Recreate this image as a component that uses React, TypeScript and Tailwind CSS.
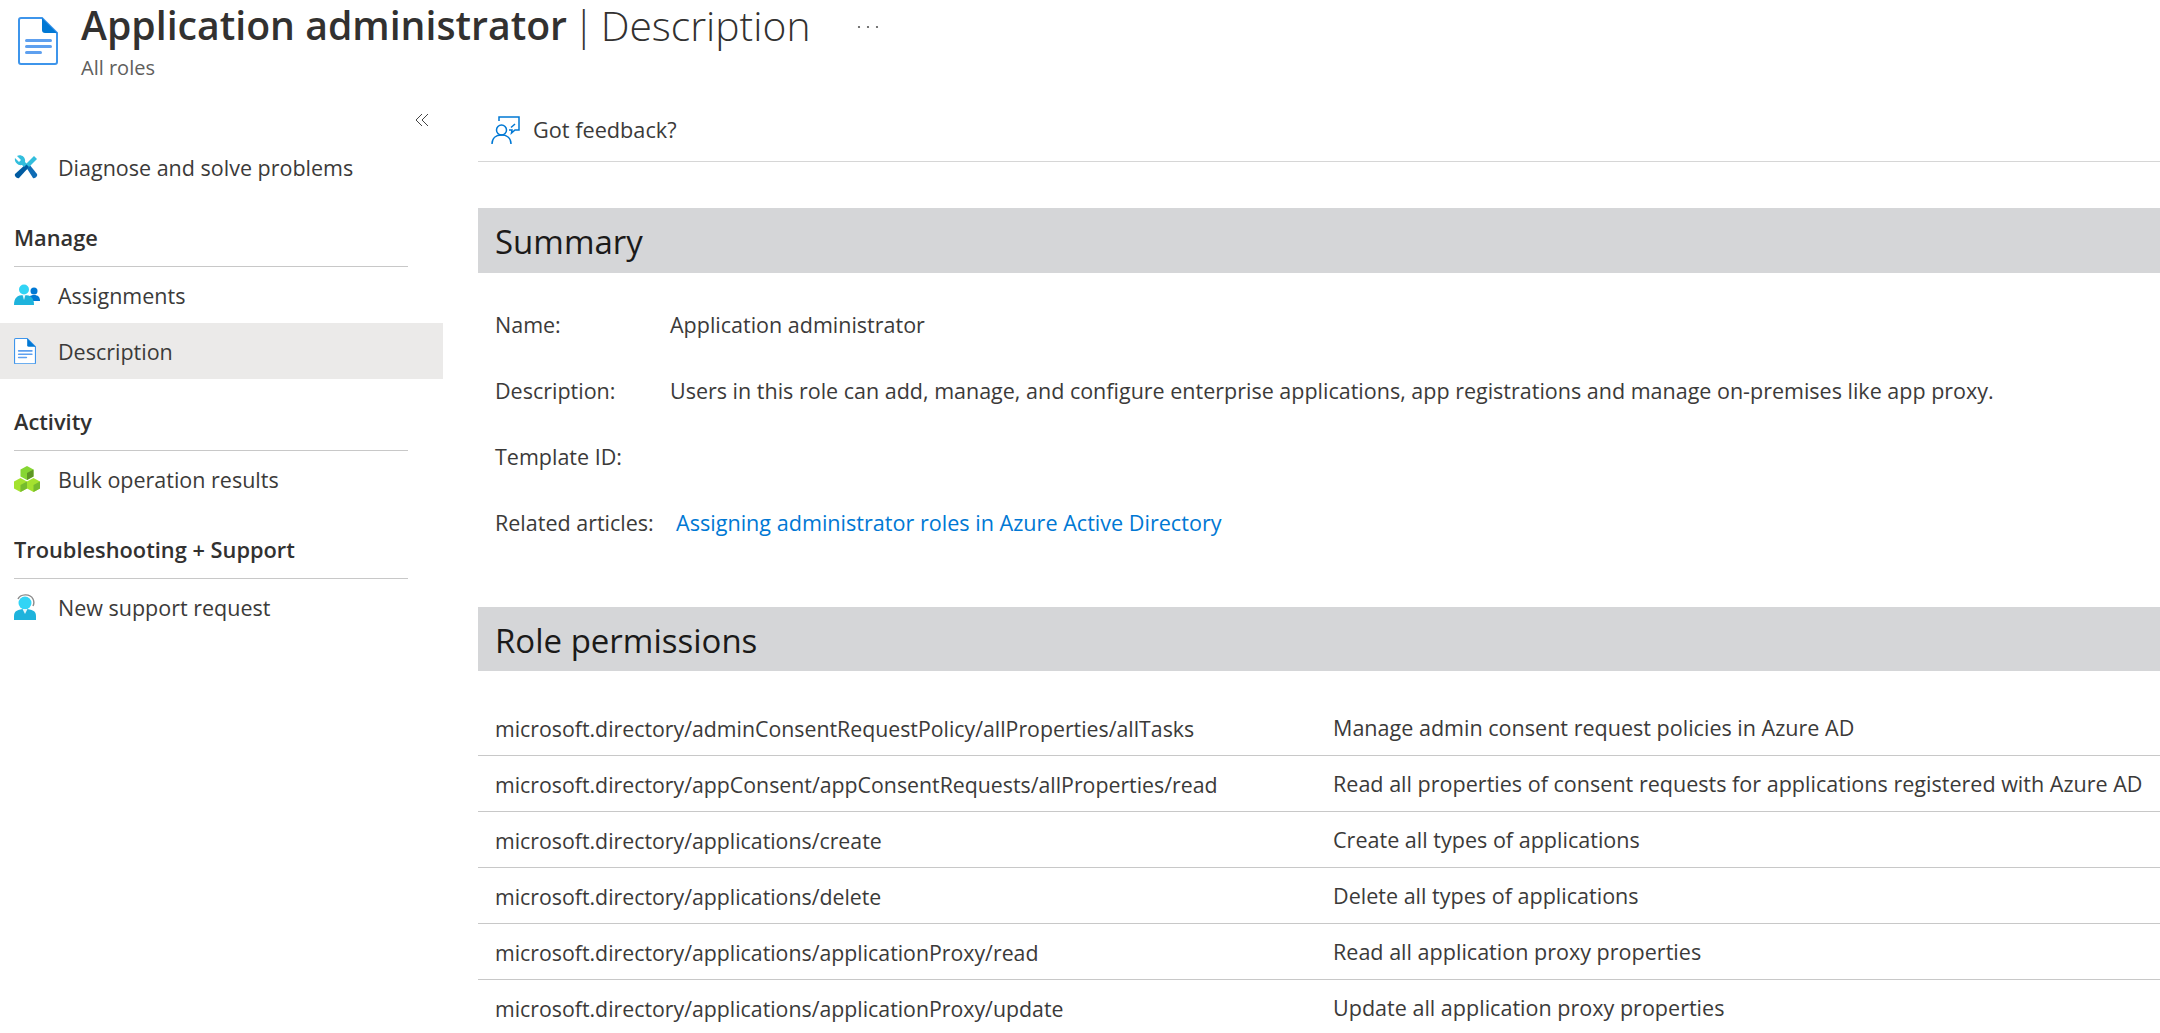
import React from "react";

const font = "font-['Open_Sans',sans-serif]";

function DocIcon({ size }: { size: number }) {
  return (
    <svg width={size} height={size * 1.2} viewBox="0 0 40 48" fill="none">
      <path d="M1 3a2 2 0 0 1 2-2h21l15 15v29a2 2 0 0 1-2 2H3a2 2 0 0 1-2-2z" fill="#fff" stroke="#3e95eb" strokeWidth="2" />
      <path d="M24 1l15 15H27a3 3 0 0 1-3-3z" fill="#0078d4" />
      <rect x="7" y="22" width="27" height="3" rx="1.5" fill="#5ea0ef" />
      <rect x="7" y="28" width="27" height="3" rx="1.5" fill="#5ea0ef" />
      <rect x="7" y="34" width="17" height="3" rx="1.5" fill="#5ea0ef" />
    </svg>
  );
}

function ToolsIcon() {
  return (
    <svg width="24" height="24" viewBox="0 0 24 24">
      <path d="M12 12l3-3 8 10c1 2-2 5-4 4z" fill="#0f6cb5" />
      <path d="M20 1l3 3-11 11-3-3z" fill="#32bedd" />
      <path d="M1 19L12 9l3 3L5 23c-2 1-5-2-4-4z" fill="#005ba1" />
      <path d="M1 3l4 4 2-2-4-4c4-2 9 1 8 6l2 2-3 3-2-2C4 11 0 7 1 3z" fill="#32bedd" />
    </svg>
  );
}

function UsersIcon() {
  return (
    <svg width="26" height="22" viewBox="0 0 26 22">
      <circle cx="20" cy="7" r="3.5" fill="#0078d4" />
      <path d="M14 17c0-4 2-6 6-6s6 2 6 6z" fill="#0078d4" />
      <circle cx="10" cy="5.500" r="5" fill="#32d4f5" />
      <path d="M0 21c0-7 3-10 10-10s10 3 10 10z" fill="#1eb3dc" />
      <path d="M8.500 11h3L10 16z" fill="#e6f7fb" />
    </svg>
  );
}

function CubesIcon() {
  return (
    <svg width="26" height="26" viewBox="0 0 26 26">
      <path d="M13 0l6.500 3.500v7L13 14l-6.500-3.500v-7z" fill="#86d633" />
      <path d="M13 7l6.500-3.500v7L13 14z" fill="#5e9624" />
      <path d="M6.500 12L13 15.500v7L6.500 26 0 22.500v-7z" fill="#a4e22f" />
      <path d="M6.500 19L13 15.500v7L6.500 26z" fill="#76bc2d" />
      <path d="M19.500 12l6.500 3.500v7L19.500 26 13 22.500v-7z" fill="#a4e22f" />
      <path d="M19.500 19l6.500-3.500v7L19.500 26z" fill="#76bc2d" />
    </svg>
  );
}

function SupportIcon() {
  return (
    <svg width="22" height="26" viewBox="0 0 22 26">
      <path d="M4 5c2-5 12-6 15 0 1 2 1 5 0 7" fill="none" stroke="#8a8a8a" strokeWidth="1.400" />
      <circle cx="11" cy="9" r="6.500" fill="#32d4f5" />
      <path d="M0 26v-4c0-5 4-7 11-7s11 2 11 7v4z" fill="#1eb3dc" />
      <path d="M8.500 15h5L11 20z" fill="#e6f7fb" />
    </svg>
  );
}

function FeedbackIcon() {
  return (
    <svg width="29" height="29" viewBox="0 0 29 29" fill="none" stroke="#0078d4" strokeWidth="1.500">
      <path d="M8 5V1h20v13h-4l-3.500 3 .5-3h-3" />
      <path d="M24 8l-4 3.500" />
      <circle cx="10.500" cy="14" r="5" />
      <path d="M1 28c0-6 4-9 9.500-9s9.500 3 9.500 9" />
    </svg>
  );
}

function NavItem({ icon, label, active }: { icon: React.ReactNode; label: string; active?: boolean }) {
  return (
    <div className={`flex h-[56px] items-center ${active ? "bg-[#ebeae9]" : ""}`}>
      <div className="flex w-[58px] shrink-0 items-center justify-start pl-[14px]">{icon}</div>
      <span className="pt-[2px] text-[21.5px] text-[#3b3a39]">{label}</span>
    </div>
  );
}

function SectionHead({ label }: { label: string }) {
  return (
    <div className="mx-[14px] flex h-[72px] w-[394px] items-end border-b border-[#c8c8c8] pb-[14px] text-[21.8px] leading-[29px] font-semibold text-[#323130]">
      {label}
    </div>
  );
}

const rows = [
  ["microsoft.directory/adminConsentRequestPolicy/allProperties/allTasks", "Manage admin consent request policies in Azure AD"],
  ["microsoft.directory/appConsent/appConsentRequests/allProperties/read", "Read all properties of consent requests for applications registered with Azure AD"],
  ["microsoft.directory/applications/create", "Create all types of applications"],
  ["microsoft.directory/applications/delete", "Delete all types of applications"],
  ["microsoft.directory/applications/applicationProxy/read", "Read all application proxy properties"],
  ["microsoft.directory/applications/applicationProxy/update", "Update all application proxy properties"],
];

export default function App() {
  return (
    <div className={`${font} h-[1033px] w-[2160px] overflow-hidden bg-white text-[#3b3a39]`}>
      <header className="flex h-[84px]">
        <div className="w-[81px] shrink-0 pl-[18px] pt-[17px]">
          <DocIcon size={40} />
        </div>
        <div>
          <div className="flex h-[50px] items-center text-[39.2px] leading-[50px] text-[#323130]">
            <span className="font-semibold">Application administrator</span>
            <span className="ml-[6px] text-[40px] font-light">|</span>
            <span className="ml-[6px] text-[40.8px] font-light">Description</span>
            <svg className="ml-[46px] mt-[4px]" width="22" height="4" viewBox="0 0 22 4" fill="#555">
              <circle cx="2" cy="2" r="1.100" />
              <circle cx="11" cy="2" r="1.100" />
              <circle cx="20" cy="2" r="1.100" />
            </svg>
          </div>
          <div className="mt-[4px] text-[20px] leading-[28px] text-[#605e5c]">All roles</div>
        </div>
      </header>
      <div className="flex">
        <aside className="w-[443px] shrink-0">
          <div className="flex h-[55px] justify-end pr-[13px] pt-[28px]">
            <svg width="16" height="16" viewBox="0 0 16 16" fill="none" stroke="#444" strokeWidth="1">
              <path d="M8 2L2 8l6 6M14 2L8 8l6 6" />
            </svg>
          </div>
          <NavItem icon={<ToolsIcon />} label="Diagnose and solve problems" />
          <SectionHead label="Manage" />
          <NavItem icon={<UsersIcon />} label="Assignments" />
          <NavItem active icon={<DocIcon size={22} />} label="Description" />
          <SectionHead label="Activity" />
          <NavItem icon={<CubesIcon />} label="Bulk operation results" />
          <SectionHead label="Troubleshooting + Support" />
          <NavItem icon={<SupportIcon />} label="New support request" />
        </aside>
        <main className="ml-[35px] min-w-0 flex-1">
          <div className="flex h-[78px] items-center gap-[13px] border-b border-[#d6d6d6] pl-[13px] pt-[15px] text-[21.7px]">
            <FeedbackIcon />
            <span>Got feedback?</span>
          </div>
          <h2 className="mt-[46px] flex h-[65px] items-center bg-[#d5d6d8] pl-[17px] pt-[2px] text-[33px] text-[#1b1a19]">Summary</h2>
          <div className="mt-[37px] pl-[17px] text-[21.5px] leading-[29px]">
            <div className="flex h-[66px] items-start"><span className="w-[175px]">Name:</span><span>Application administrator</span></div>
            <div className="flex h-[66px] items-start"><span className="w-[175px]">Description:</span><span>Users in this role can add, manage, and configure enterprise applications, app registrations and manage on-premises like app proxy.</span></div>
            <div className="flex h-[66px] items-start"><span className="w-[175px]">Template ID:</span></div>
            <div className="flex h-[66px] items-start"><span className="w-[181px]">Related articles:</span><span className="text-[21.6px] text-[#0078d4]">Assigning administrator roles in Azure Active Directory</span></div>
          </div>
          <h2 className="mt-[33px] flex h-[64px] items-center bg-[#d5d6d8] pl-[17px] pt-[3px] text-[33px] text-[#1b1a19]">Role permissions</h2>
          <div className="mt-[29px] text-[21.55px]">
            {rows.map(([a, b]) => (
              <div key={a} className="flex h-[56px] items-center border-b border-[#c8c8c8] pl-[17px] pt-[2px]">
                <span className="w-[838px] shrink-0 text-[21.3px]">{a}</span>
                <span>{b}</span>
              </div>
            ))}
          </div>
        </main>
      </div>
    </div>
  );
}
